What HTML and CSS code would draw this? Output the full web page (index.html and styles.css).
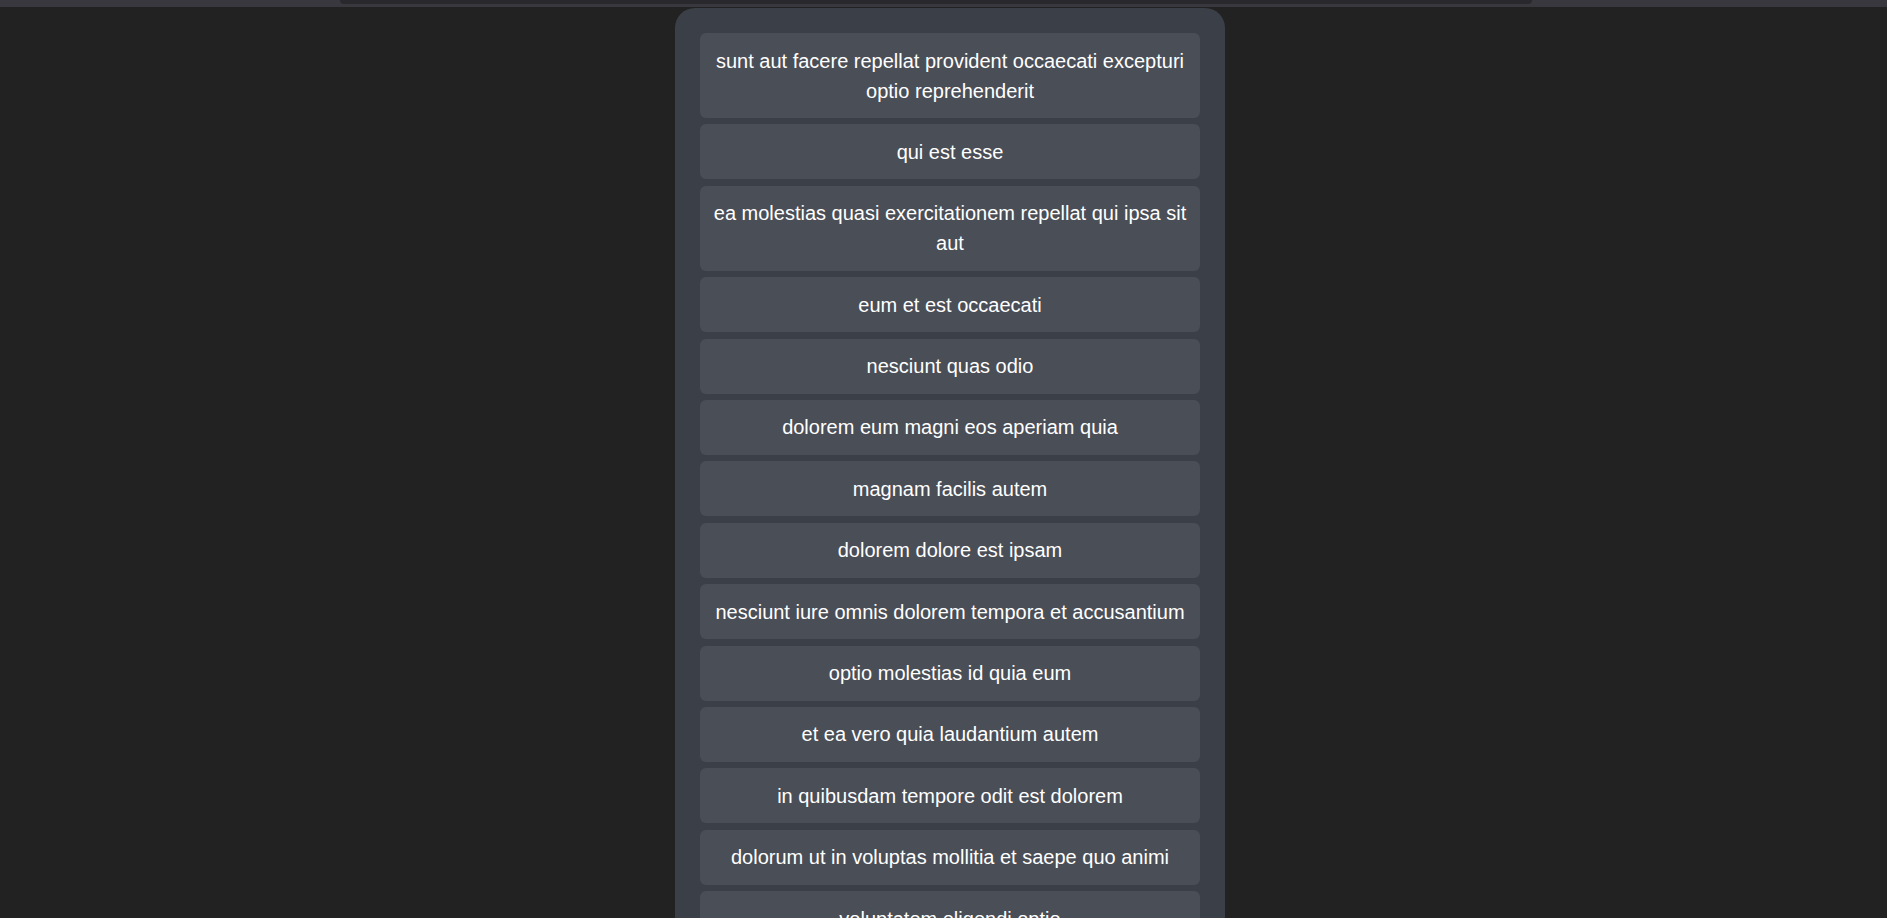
FILE: index.html
```html
<!DOCTYPE html>
<html lang="en">
<head>
<meta charset="utf-8">
<title>Posts</title>
<link rel="stylesheet" href="styles.css">
</head>
<body>
<div class="topbar"><div class="topbar-inner"></div></div>
<main class="panel">
  <div class="post">sunt aut facere repellat provident occaecati excepturi optio reprehenderit</div>
  <div class="post">qui est esse</div>
  <div class="post">ea molestias quasi exercitationem repellat qui ipsa sit aut</div>
  <div class="post">eum et est occaecati</div>
  <div class="post">nesciunt quas odio</div>
  <div class="post">dolorem eum magni eos aperiam quia</div>
  <div class="post">magnam facilis autem</div>
  <div class="post">dolorem dolore est ipsam</div>
  <div class="post">nesciunt iure omnis dolorem tempora et accusantium</div>
  <div class="post">optio molestias id quia eum</div>
  <div class="post">et ea vero quia laudantium autem</div>
  <div class="post">in quibusdam tempore odit est dolorem</div>
  <div class="post">dolorum ut in voluptas mollitia et saepe quo animi</div>
  <div class="post">voluptatem eligendi optio</div>
  <div class="post">eveniet quod temporibus</div>
  <div class="post">sint suscipit perspiciatis velit dolorum rerum ipsa laboriosam odio</div>
  <div class="post">fugit voluptas sed molestias voluptatem provident</div>
  <div class="post">voluptate et itaque vero tempora molestiae</div>
</main>
</body>
</html>
```
FILE: styles.css
```css
html, body {
  margin: 0;
  padding: 0;
  background: #222222;
  overflow: hidden;
}

body {
  font-family: "Liberation Sans", Arial, sans-serif;
  color: #ffffff;
}

.topbar {
  height: 7px;
  background: #39383f;
}

.topbar-inner {
  margin-left: 340px;
  width: 1192px;
  height: 4px;
  background: #29282d;
  border-radius: 0 0 4px 4px;
}

.panel {
  margin: 1px 0 0 675px;
  width: 550px;
  box-sizing: border-box;
  padding: 25px 25px;
  background: #3b3f47;
  border-radius: 20px;
  display: flex;
  flex-direction: column;
  gap: 6.4px;
}

.post {
  background: #4a4e57;
  border-radius: 6px;
  padding: 12.5px 12px;
  font-size: 20px;
  line-height: 30px;
  text-align: center;
}
```
